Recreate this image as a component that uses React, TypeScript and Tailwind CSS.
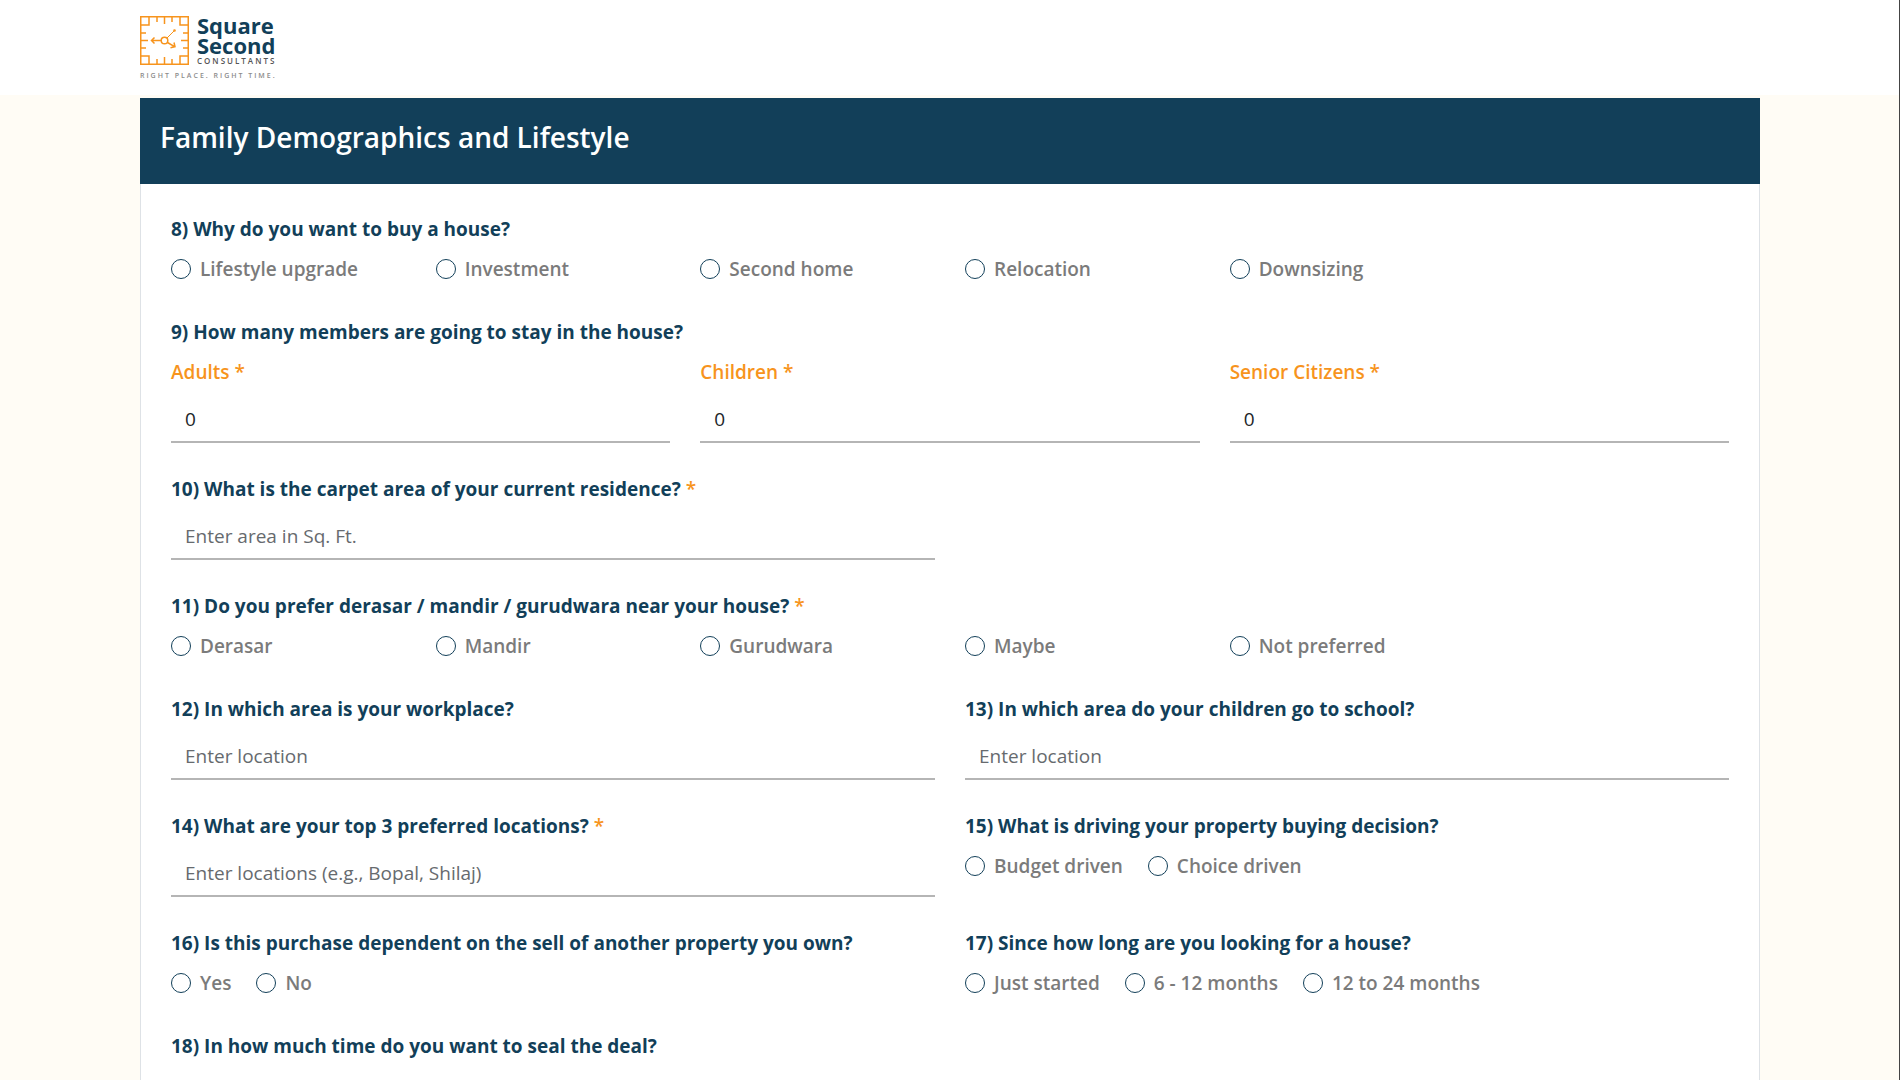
import { useId, type ReactNode } from "react";

const Required = () => <span className="font-semibold text-[#f7941d]">*</span>;

const headingClass = "text-[19px] leading-[30px] font-bold text-[#123f59]";

function RadioQuestion({
  title,
  options,
  required,
  columns,
}: {
  title: string;
  options: string[];
  required?: boolean;
  columns?: boolean;
}) {
  const name = useId();
  return (
    <fieldset className="min-w-0 pb-0.5">
      <legend className={`mb-[10px] ${headingClass}`}>
        {title} {required && <Required />}
      </legend>
      <div className={columns ? "grid grid-cols-6 gap-x-[30px]" : "flex flex-wrap gap-x-[25px]"}>
        {options.map((option) => (
          <label
            key={option}
            className="flex h-[30px] items-center gap-[9px] text-[19px] font-semibold whitespace-nowrap text-[#7b7b7b]"
          >
            <input
              type="radio"
              name={name}
              value={option}
              className="size-5 shrink-0 appearance-none rounded-full border border-[#123f59] bg-white checked:border-[6px]"
            />
            {option}
          </label>
        ))}
      </div>
    </fieldset>
  );
}

const inputClass =
  "block h-[46px] w-full border-b-2 border-[#b5b5b5] bg-transparent px-[14px] text-[19px] text-[#212529] outline-none placeholder:text-[#666a6e]";

function TextQuestion({ title, placeholder, required }: { title: string; placeholder: string; required?: boolean }) {
  const id = useId();
  return (
    <div>
      <label htmlFor={id} className={`mb-[10px] block ${headingClass}`}>
        {title} {required && <Required />}
      </label>
      <input id={id} type="text" placeholder={placeholder} className={inputClass} />
    </div>
  );
}

function CountField({ label }: { label: string }) {
  const id = useId();
  return (
    <div>
      <label htmlFor={id} className="mb-[10px] block text-[19px] leading-[30px] font-semibold text-[#f7941d]">
        {label} *
      </label>
      <input id={id} type="text" inputMode="numeric" defaultValue="0" className={inputClass} />
    </div>
  );
}

const Pair = ({ children }: { children: ReactNode }) => (
  <div className="grid grid-cols-2 gap-x-[30px]">{children}</div>
);

function Logo() {
  return (
    <a href="#" aria-label="Square Second Consultants" className="block w-fit">
      <div className="flex items-end gap-2">
        <svg viewBox="0 0 49 49" className="size-[49px]" fill="none" stroke="#f7941d" strokeWidth="1.5">
          <rect x="0.75" y="0.75" width="47.500" height="47.500" />
          <path d="M9 1v8H1M40 1v8h8M9 48v-8H1M40 48v-8h8" />
          <path d="M17 1v5M24.500 1v7M32 1v5M17 48v-5M24.500 48v-7M32 48v-5M1 17h5M1 24.500h7M1 32h5M48 17h-5M48 24.500h-7M48 32h-5" />
          <circle cx="24.500" cy="24.500" r="3.300" />
          <path d="M21 24.500H11.500M14.500 21.500L11.500 24.500l3 3M27.500 26.500L35 30.800M34 26.500l1 4.300-4.500 1" />
          <path d="M27 22L34.500 14.500" strokeWidth="1" />
          <circle cx="34.500" cy="14.500" r="0.600" />
        </svg>
        <div className="text-[#123f59]">
          <div className="text-[22px] leading-5 font-bold">
            Square
            <br />
            Second
          </div>
          <div className="mt-0.5 text-[8px] leading-2 font-semibold tracking-[2px] text-[#555555]">CONSULTANTS</div>
        </div>
      </div>
      <div className="mt-1.5 text-[7px] leading-[10px] font-semibold tracking-[2px] text-[#8c8c8c]">
        RIGHT PLACE. RIGHT TIME.
      </div>
    </a>
  );
}

export default function App() {
  return (
    <div className="relative flex min-h-screen flex-col bg-[#fffcf5] font-['Open_Sans',sans-serif]">
      <header className="h-[95px] bg-white pt-[15px]">
        <div className="mx-auto max-w-[1620px]">
          <Logo />
        </div>
      </header>
      <main className="mx-auto mt-[3px] flex w-full max-w-[1620px] flex-1 flex-col">
        <h1 className="bg-[#123f59] px-5 pt-[19px] pb-[27px] text-[28px] leading-10 font-semibold text-white">
          Family Demographics and Lifestyle
        </h1>
        <form className="flex flex-1 flex-col gap-[31px] border-x border-[#dee2e6] bg-white px-[30px] pt-[30px] pb-4">
          <RadioQuestion
            columns
            title="8) Why do you want to buy a house?"
            options={["Lifestyle upgrade", "Investment", "Second home", "Relocation", "Downsizing"]}
          />
          <fieldset className="min-w-0">
            <legend className={`mb-[10px] ${headingClass}`}>9) How many members are going to stay in the house?</legend>
            <div className="grid grid-cols-3 gap-x-[30px]">
              <CountField label="Adults" />
              <CountField label="Children" />
              <CountField label="Senior Citizens" />
            </div>
          </fieldset>
          <Pair>
            <TextQuestion
              required
              title="10) What is the carpet area of your current residence?"
              placeholder="Enter area in Sq. Ft."
            />
          </Pair>
          <RadioQuestion
            columns
            required
            title="11) Do you prefer derasar / mandir / gurudwara near your house?"
            options={["Derasar", "Mandir", "Gurudwara", "Maybe", "Not preferred"]}
          />
          <Pair>
            <TextQuestion title="12) In which area is your workplace?" placeholder="Enter location" />
            <TextQuestion title="13) In which area do your children go to school?" placeholder="Enter location" />
          </Pair>
          <Pair>
            <TextQuestion
              required
              title="14) What are your top 3 preferred locations?"
              placeholder="Enter locations (e.g., Bopal, Shilaj)"
            />
            <RadioQuestion
              title="15) What is driving your property buying decision?"
              options={["Budget driven", "Choice driven"]}
            />
          </Pair>
          <Pair>
            <RadioQuestion
              title="16) Is this purchase dependent on the sell of another property you own?"
              options={["Yes", "No"]}
            />
            <RadioQuestion
              title="17) Since how long are you looking for a house?"
              options={["Just started", "6 - 12 months", "12 to 24 months"]}
            />
          </Pair>
          <h2 className={headingClass}>18) In how much time do you want to seal the deal?</h2>
        </form>
      </main>
      <div className="absolute inset-y-0 right-0 w-px bg-[#444444]" />
    </div>
  );
}
